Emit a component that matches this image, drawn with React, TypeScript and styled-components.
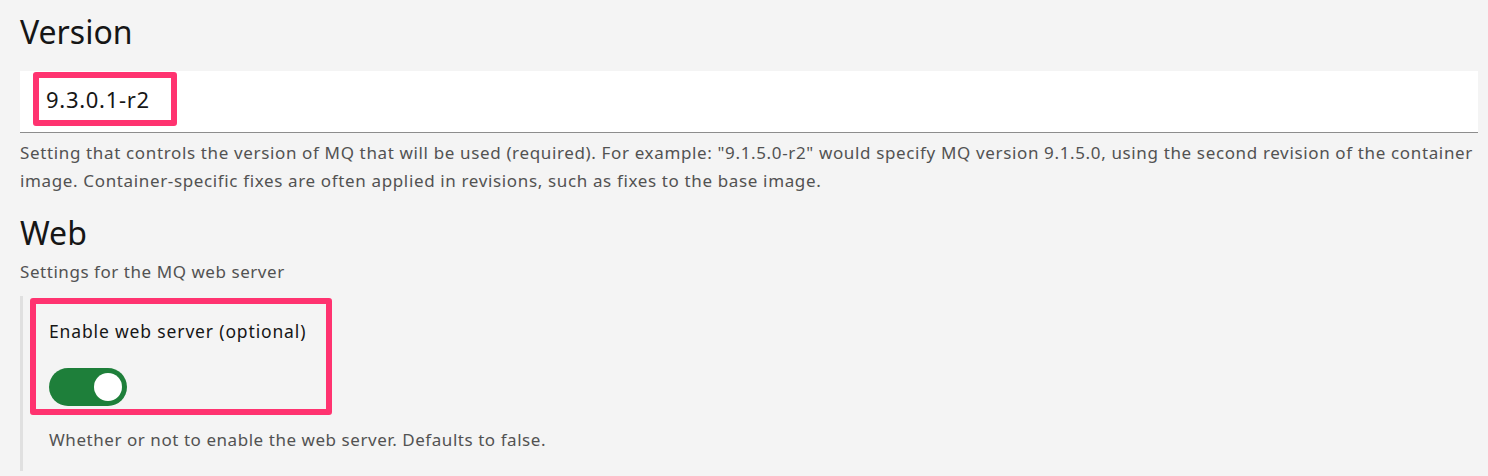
import styled, { createGlobalStyle } from "styled-components";

const GlobalStyle = createGlobalStyle`
  html, body {
    margin: 0;
    padding: 0;
    background: #f4f4f4;
  }
  body {
    font-family: "Noto Sans", "Open Sans", sans-serif;
    color: #161616;
  }
`;

const Page = styled.main`
  padding: 10px 10px 0 20px;
`;

const Heading = styled.h2`
  margin: 0;
  font-size: 32px;
  line-height: 44px;
  font-weight: 400;
  color: #161616;
`;

const Field = styled.div`
  margin-top: 17px;
  height: 62px;
  background: #fff;
  border-bottom: 1px solid #8d8d8d;
  display: flex;
  align-items: center;
  padding-left: 13px;
  padding-bottom: 6px;
  box-sizing: border-box;
`;

const Highlight = styled.div<{ $width?: number }>`
  border: 6px solid #ff3370;
  border-radius: 3px;
  box-sizing: border-box;
  ${({ $width }) => ($width ? `width: ${$width}px;` : "")}
`;

const ValueBox = styled(Highlight)`
  height: 54px;
  padding: 0 21px 0 7px;
  display: flex;
  align-items: center;
  font-size: 22px;
  letter-spacing: 0.7px;
  color: #161616;
`;

const Helper = styled.p`
  margin: 6px 0 0;
  font-size: 17px;
  line-height: 28px;
  letter-spacing: 0.64px;
  color: #525252;
`;

const SectionHeading = styled(Heading)`
  margin-top: 16px;
`;

const Description = styled.p`
  margin: 5px 0 0;
  font-size: 17px;
  line-height: 24px;
  letter-spacing: 0.55px;
  color: #525252;
`;

const Group = styled.div`
  margin-top: 12px;
  border-left: 3px solid #e0e0e0;
  padding: 2px 0 19px 7px;
`;

const ToggleBox = styled(Highlight)`
  padding: 15px 14px 3px 13px;
  display: flex;
  flex-direction: column;
  align-items: flex-start;
`;

const Label = styled.label`
  font-size: 17.5px;
  line-height: 24px;
  letter-spacing: 0.85px;
  color: #161616;
`;

const Switch = styled.button<{ $on: boolean }>`
  margin-top: 25px;
  width: 78px;
  height: 38px;
  border: none;
  border-radius: 19px;
  padding: 0 5px;
  background: ${({ $on }) => ($on ? "#1e7f3a" : "#8d8d8d")};
  display: flex;
  align-items: center;
  justify-content: ${({ $on }) => ($on ? "flex-end" : "flex-start")};
  cursor: pointer;
`;

const Knob = styled.span`
  width: 28px;
  height: 28px;
  border-radius: 50%;
  background: #fff;
`;

const GroupHelper = styled(Description)`
  margin: 13px 0 0 19px;
`;

const App = () => {
  return (
    <>
      <GlobalStyle />
      <Page>
        <Heading>Version</Heading>
        <Field>
          <ValueBox>9.3.0.1-r2</ValueBox>
        </Field>
        <Helper>
          Setting that controls the version of MQ that will be used (required). For example:
          "9.1.5.0-r2" would specify MQ version 9.1.5.0, using the second revision of the container
          image. Container-specific fixes are often applied in revisions, such as fixes to the base
          image.
        </Helper>

        <SectionHeading>Web</SectionHeading>
        <Description>Settings for the MQ web server</Description>
        <Group>
          <ToggleBox $width={302}>
            <Label>Enable web server (optional)</Label>
            <Switch $on aria-label="Enable web server">
              <Knob />
            </Switch>
          </ToggleBox>
          <GroupHelper>Whether or not to enable the web server. Defaults to false.</GroupHelper>
        </Group>
      </Page>
    </>
  );
};

export default App;
